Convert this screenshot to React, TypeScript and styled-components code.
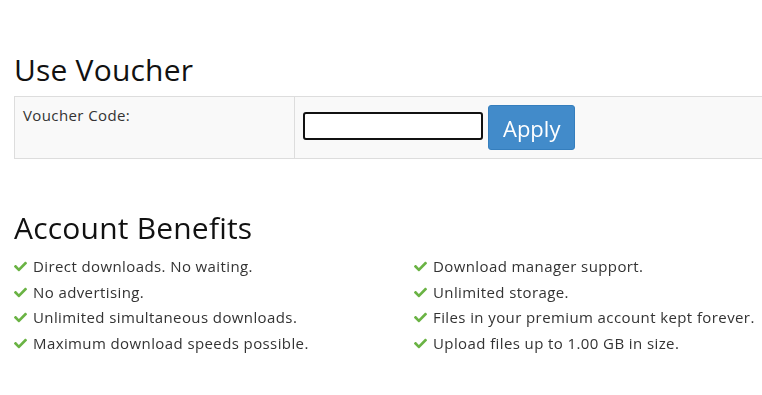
import styled, { createGlobalStyle } from 'styled-components';
import { FaCheck } from 'react-icons/fa';

const GlobalStyle = createGlobalStyle`
  body {
    margin: 0;
    overflow: hidden;
    background: #fff;
    font-family: 'Open Sans', 'Liberation Sans', sans-serif;
    color: #333;
  }
`;

const Page = styled.div`
  width: 800px;
  padding: 0 0 0 14px;
`;

const Heading = styled.h2`
  margin: 53px 0 10px 0;
  font-size: 30px;
  font-weight: 400;
  line-height: 33px;
  letter-spacing: 0.2px;
  color: #111;

  &.second {
    margin-top: 52px;
  }
`;

const VoucherTable = styled.div`
  display: grid;
  grid-template-columns: 280px 1fr;
  background: #f9f9f9;
  border: 1px solid #ddd;
`;

const LabelCell = styled.div`
  padding: 8px;
  font-size: 15px;
  line-height: 20px;
  letter-spacing: 0.4px;
  color: #333;
  border-right: 1px solid #ddd;
`;

const FieldCell = styled.div`
  padding: 8px;
  display: flex;
  align-items: flex-start;
  gap: 5px;
`;

const CodeInput = styled.input`
  width: 180px;
  height: 28px;
  box-sizing: border-box;
  border: 2px solid #111;
  border-radius: 3px;
  background: #fff;
  margin-top: 7px;
  outline: none;
  font-size: 14px;
`;

const ApplyButton = styled.button`
  height: 45px;
  padding: 0 14px;
  background: #428bca;
  border: 1px solid #357ebd;
  border-radius: 3px;
  color: #fff;
  font-family: inherit;
  font-size: 22px;
  line-height: 1;
`;

const Benefits = styled.ul`
  list-style: none;
  margin: 0;
  padding: 0;
  display: grid;
  grid-template-columns: 400px 1fr;
  grid-auto-flow: column;
  grid-template-rows: repeat(4, auto);
`;

const Benefit = styled.li`
  display: flex;
  align-items: center;
  gap: 6px;
  font-size: 15px;
  line-height: 25.5px;
  letter-spacing: 0.4px;
  color: #333;

  svg {
    color: #6ab344;
    flex: none;
  }
`;

const left = [
  'Direct downloads. No waiting.',
  'No advertising.',
  'Unlimited simultaneous downloads.',
  'Maximum download speeds possible.',
];

const right = [
  'Download manager support.',
  'Unlimited storage.',
  'Files in your premium account kept forever.',
  'Upload files up to 1.00 GB in size.',
];

export default function App() {
  return (
    <Page>
      <GlobalStyle />
      <Heading>Use Voucher</Heading>
      <VoucherTable>
        <LabelCell>Voucher Code:</LabelCell>
        <FieldCell>
          <CodeInput type="text" autoFocus />
          <ApplyButton>Apply</ApplyButton>
        </FieldCell>
      </VoucherTable>
      <Heading className="second">Account Benefits</Heading>
      <Benefits>
        {[...left, ...right].map((text) => (
          <Benefit key={text}>
            <FaCheck size={13} />
            {text}
          </Benefit>
        ))}
      </Benefits>
    </Page>
  );
}
